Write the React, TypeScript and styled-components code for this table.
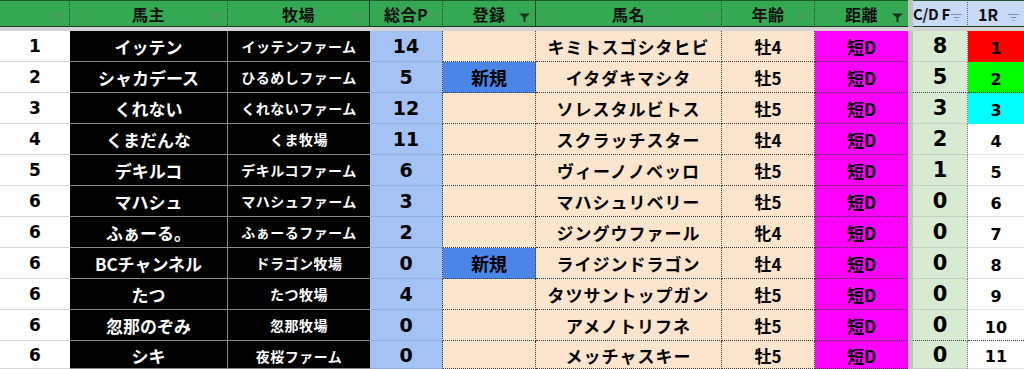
import React from 'react'
import styled, { createGlobalStyle } from 'styled-components'

const GlobalStyle = createGlobalStyle`
    html, body {
        margin: 0;
        padding: 0;
        background: #fff;
    }
    body {
        font-family: "Noto Sans CJK JP", "Noto Sans", sans-serif;
        font-weight: 700;
        color: #000;
    }
`

type RowType = {
    rank: number
    owner: string
    farm: string
    points: number
    isNew: boolean
    horse: string
    age: string
    dist: string
    cdf: number
    r1: number
    r1Bg?: string
    dottedBottom?: boolean
}

const rows: RowType[] = [
    { rank: 1, owner: 'イッテン', farm: 'イッテンファーム', points: 14, isNew: false, horse: 'キミトスゴシタヒビ', age: '牡4', dist: '短D', cdf: 8, r1: 1, r1Bg: '#ff0000' },
    { rank: 2, owner: 'シャカデース', farm: 'ひるめしファーム', points: 5, isNew: true, horse: 'イタダキマシタ', age: '牡5', dist: '短D', cdf: 5, r1: 2, r1Bg: '#00ff00', dottedBottom: true },
    { rank: 3, owner: 'くれない', farm: 'くれないファーム', points: 12, isNew: false, horse: 'ソレスタルビトス', age: '牡5', dist: '短D', cdf: 3, r1: 3, r1Bg: '#00ffff' },
    { rank: 4, owner: 'くまだんな', farm: 'くま牧場', points: 11, isNew: false, horse: 'スクラッチスター', age: '牡4', dist: '短D', cdf: 2, r1: 4 },
    { rank: 5, owner: 'デキルコ', farm: 'デキルコファーム', points: 6, isNew: false, horse: 'ヴィーノノベッロ', age: '牡5', dist: '短D', cdf: 1, r1: 5 },
    { rank: 6, owner: 'マハシュ', farm: 'マハシュファーム', points: 3, isNew: false, horse: 'マハシュリベリー', age: '牡5', dist: '短D', cdf: 0, r1: 6 },
    { rank: 6, owner: 'ふぁーる。', farm: 'ふぁーるファーム', points: 2, isNew: false, horse: 'ジングウファール', age: '牝4', dist: '短D', cdf: 0, r1: 7 },
    { rank: 6, owner: 'BCチャンネル', farm: 'ドラゴン牧場', points: 0, isNew: true, horse: 'ライジンドラゴン', age: '牡4', dist: '短D', cdf: 0, r1: 8 },
    { rank: 6, owner: 'たつ', farm: 'たつ牧場', points: 4, isNew: false, horse: 'タツサントップガン', age: '牡5', dist: '短D', cdf: 0, r1: 9 },
    { rank: 6, owner: '忽那のぞみ', farm: '忽那牧場', points: 0, isNew: false, horse: 'アメノトリフネ', age: '牡5', dist: '短D', cdf: 0, r1: 10, dottedBottom: true },
    { rank: 6, owner: 'シキ', farm: '夜桜ファーム', points: 0, isNew: false, horse: 'メッチャスキー', age: '牡5', dist: '短D', cdf: 0, r1: 11 },
]

const DOT = '1px dotted #3a3a3a'

// last row is cut by the window edge, as in the sheet screenshot
const Sheet = styled.div`
    display: grid;
    grid-template-columns: 70px 158px 142px 73px 93px 186px 93px 93px 5px 55px 56px;
    grid-template-rows: 27px 4px repeat(10, 31px) 28px;
    width: 1024px;
    height: 369px;
    overflow: hidden;
`

const HeadCell = styled.div<{ $bg?: string; $line?: string }>`
    position: relative;
    box-sizing: border-box;
    display: flex;
    align-items: center;
    justify-content: center;
    background: ${p => p.$bg || '#34a853'};
    border-top: 1px solid #1d5a2c;
    border-bottom: 1px solid #1d3a24;
    border-right: ${p => p.$line || '1px dotted #1d4a2a'};
    font-size: 16px;
    color: #111;
    white-space: nowrap;
    overflow: hidden;
    letter-spacing: 0.5px;
`

const SideHeadCell = styled(HeadCell)`
    justify-content: flex-start;
    padding-left: ${p => p.$bg ? 0 : 10}px;
`

const SmallHeadText = styled.span<{ $size?: number }>`
    font-size: ${p => p.$size || 14}px;
    letter-spacing: -0.3px;
`

const FilterBox = styled.span`
    position: absolute;
    right: 5px;
    top: 12px;
    width: 11px;
    height: 9px;
    display: flex;
`

const Band = styled.div`
    grid-column: 1 / -1;
    grid-row: 2;
    background: #d3d3d3;
`

const FreezeLine = styled.div`
    grid-column: 9;
    grid-row: 1 / -1;
    background: #c0c0c0;
`

const Cell = styled.div<{
    $bg?: string
    $color?: string
    $size?: number
    $bottom?: string
    $right?: string
    $pt?: number
    $ls?: number
    $col?: number
    $num?: boolean
}>`
    box-sizing: border-box;
    display: flex;
    align-items: center;
    justify-content: center;
    grid-column: ${p => p.$col || 'auto'};
    padding-top: ${p => p.$pt || 0}px;
    background: ${p => p.$bg || '#fff'};
    color: ${p => p.$color || '#000'};
    font-family: ${p => p.$num ? '"DejaVu Sans", sans-serif' : 'inherit'};
    font-size: ${p => p.$size || 15}px;
    letter-spacing: ${p => p.$ls || 0}px;
    border-bottom: ${p => p.$bottom || 'none'};
    border-right: ${p => p.$right || 'none'};
    white-space: nowrap;
    overflow: hidden;
    line-height: 1;
`

function FilterIcon({ active, color }: { active?: boolean; color: string }) {

    if (active) {
        return (
            <FilterBox>
                <svg width="11" height="9" viewBox="0 0 11 9">
                    <polygon points="0,0.5 11,0.5 6.5,4.5 6.5,9 4.5,9 4.5,4.5" fill="#1a3322" />
                </svg>
            </FilterBox>
        )
    }

    return (
        <FilterBox>
            <svg width="11" height="9" viewBox="0 0 11 9">
                <path d="M0 1.5h11M2.5 4.5h6M4.5 7.5h2" stroke={color} strokeWidth="1.2" />
            </svg>
        </FilterBox>
    )
}

const greenIcon = '#6a8d70'
const blueIcon = '#8394ad'

function App() {
    return (
        <>
            <GlobalStyle />
            <Sheet>

                <HeadCell><FilterIcon color={greenIcon} /></HeadCell>
                <HeadCell>馬主<FilterIcon color={greenIcon} /></HeadCell>
                <HeadCell $line="1px solid #1d3a24">牧場<FilterIcon color={greenIcon} /></HeadCell>
                <HeadCell>総合P<FilterIcon color={greenIcon} /></HeadCell>
                <HeadCell $line="1px solid #1d3a24">登録<FilterIcon active color={greenIcon} /></HeadCell>
                <HeadCell>馬名<FilterIcon color={greenIcon} /></HeadCell>
                <HeadCell>年齢<FilterIcon color={greenIcon} /></HeadCell>
                <HeadCell $line="none">距離<FilterIcon active color={greenIcon} /></HeadCell>
                <FreezeLine />
                <SideHeadCell $bg="#c9daf8" $line="1px dotted #55657a">
                    <SmallHeadText $size={15}>C/D F</SmallHeadText><FilterIcon color={blueIcon} />
                </SideHeadCell>
                <SideHeadCell $line="none" style={{ background: '#c9daf8' }}>
                    <SmallHeadText $size={16}>1R</SmallHeadText><FilterIcon color={blueIcon} />
                </SideHeadCell>

                <Band />

                {rows.map((r, i) => {
                    // the last row is cut short by the window, keep its text near the same line
                    const last = i === rows.length - 1
                    const pt = last ? 2 : 0
                    const cdfBottom = r.dottedBottom ? DOT : '1px solid #c3cfc0'
                    const r1Bottom = r.dottedBottom ? DOT : (r.r1Bg ? 'none' : '1px solid #e2e2e2')
                    return (
                        <React.Fragment key={i}>
                            <Cell $col={1} $num $pt={pt} $size={17} $bottom="1px solid #d6d6d6">{r.rank}</Cell>
                            <Cell $pt={pt} $bg="#000" $color="#fff" $size={17} $bottom="1px solid #8a8a8a" $right="1px solid #8a8a8a">{r.owner}</Cell>
                            <Cell $pt={pt} $bg="#000" $color="#fff" $size={14} $ls={0.5} $bottom="1px solid #8a8a8a">{r.farm}</Cell>
                            <Cell $num $pt={pt} $bg="#a4c2f4" $size={19} $bottom="1px solid #93aede" $right={DOT}>{r.points}</Cell>
                            <Cell $pt={pt} $bg={r.isNew ? '#4a86e8' : '#fce5cd'} $size={18} $bottom={DOT} $right={DOT}>{r.isNew ? '新規' : ''}</Cell>
                            <Cell $pt={pt} $bg="#fce5cd" $size={17} $ls={1} $bottom={DOT} $right={DOT}>{r.horse}</Cell>
                            <Cell $pt={pt} $bg="#fce5cd" $size={17} $bottom={DOT} $right={DOT}>{r.age}</Cell>
                            <Cell $pt={pt} $bg="#ff00ff" $size={17} $bottom={DOT}>{r.dist}</Cell>
                            <Cell $col={10} $num $pt={pt} $bg="#d9ead3" $size={21} $bottom={cdfBottom} $right="1px dotted #777">{r.cdf}</Cell>
                            <Cell $num $pt={5} $bg={r.r1Bg || '#fff'} $size={16} $bottom={r1Bottom}>{r.r1}</Cell>
                        </React.Fragment>
                    )
                })}

            </Sheet>
        </>
    )
}

export default App
